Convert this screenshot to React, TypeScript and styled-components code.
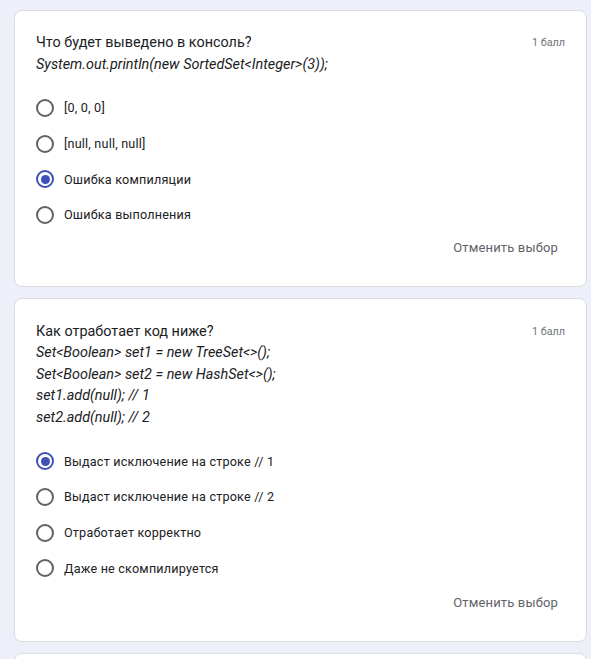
import React from "react";
import styled, { createGlobalStyle } from "styled-components";

const Global = createGlobalStyle`
  html, body { margin: 0; padding: 0; }
  body {
    background: #edf0f9;
    font-family: Roboto, "Liberation Sans", Arial, sans-serif;
    color: #202124;
  }
`;

const Page = styled.div`
  display: flex;
  flex-direction: column;
  gap: 11px;
  padding: 10px 4px 0 14px;
  height: 659px;
  box-sizing: border-box;
  overflow: hidden;
`;

const Card = styled.div<{ $top?: number; $bottom?: number; $height?: number }>`
  background: #fff;
  border: 1px solid #dadce0;
  border-radius: 8px;
  padding: ${(p) => p.$top ?? 20}px 21px ${(p) => p.$bottom ?? 23}px 21px;
  flex-shrink: 0;
  ${(p) => (p.$height ? `height: ${p.$height}px;` : "")}
`;

const Header = styled.div`
  display: flex;
  justify-content: space-between;
  align-items: flex-start;
`;

const TitleBlock = styled.div`
  font-size: 14.4px;
  line-height: 21.6px;
  color: #202124;
`;

const Code = styled.div`
  font-style: italic;
`;

const Points = styled.div`
  font-size: 10.8px;
  line-height: 21.6px;
  color: #70757a;
  flex-shrink: 0;
`;

const Options = styled.div`
  display: flex;
  flex-direction: column;
  margin-top: 15px;
`;

const Option = styled.label`
  display: flex;
  align-items: center;
  height: 35.6px;
  gap: 10px;
  font-size: 12.6px;
  color: #202124;
  letter-spacing: 0.2px;
`;

const Radio = styled.span<{ $checked?: boolean }>`
  width: 18px;
  height: 18px;
  box-sizing: border-box;
  border-radius: 50%;
  border: 2px solid ${(p) => (p.$checked ? "#3f51b5" : "#5f6368")};
  display: flex;
  align-items: center;
  justify-content: center;
  flex-shrink: 0;
  &::after {
    content: "";
    display: ${(p) => (p.$checked ? "block" : "none")};
    width: 9px;
    height: 9px;
    border-radius: 50%;
    background: #3f51b5;
  }
`;

const Footer = styled.div<{ $shift?: number }>`
  display: flex;
  justify-content: flex-end;
  align-items: center;
  height: 30px;
  margin-top: ${(p) => p.$shift ?? 0}px;
`;

const Clear = styled.button`
  background: none;
  border: none;
  padding: 0 7px 0 0;
  font-family: Roboto, "Liberation Sans", Arial, sans-serif;
  font-weight: 400;
  font-size: 13px;
  letter-spacing: 0.15px;
  color: #5f6368;
  cursor: pointer;
`;

type Q = {
  title: string;
  code: string[];
  options: string[];
  checked: number;
  top: number;
  shift: number;
};

const questions: Q[] = [
  {
    title: "Что будет выведено в консоль?",
    code: ["System.out.println(new SortedSet<Integer>(3));"],
    options: ["[0, 0, 0]", "[null, null, null]", "Ошибка компиляции", "Ошибка выполнения"],
    checked: 2,
    top: 21,
    shift: 0,
  },
  {
    title: "Как отработает код ниже?",
    code: [
      "Set<Boolean> set1 = new TreeSet<>();",
      "Set<Boolean> set2 = new HashSet<>();",
      "set1.add(null); // 1",
      "set2.add(null); // 2",
    ],
    options: [
      "Выдаст исключение на строке // 1",
      "Выдаст исключение на строке // 2",
      "Отработает корректно",
      "Даже не скомпилируется",
    ],
    checked: 0,
    top: 22,
    shift: 2,
  },
];

export default function App() {
  return (
    <>
      <Global />
      <Page>
        {questions.map((q, i) => (
          <Card key={i} $top={q.top}>
            <Header>
              <TitleBlock>
                <div>{q.title}</div>
                {q.code.map((c, j) => (
                  <Code key={j}>{c}</Code>
                ))}
              </TitleBlock>
              <Points>1 балл</Points>
            </Header>
            <Options>
              {q.options.map((o, j) => (
                <Option key={j}>
                  <Radio $checked={j === q.checked} />
                  <span>{o}</span>
                </Option>
              ))}
            </Options>
            <Footer $shift={q.shift}>
              <Clear>Отменить выбор</Clear>
            </Footer>
          </Card>
        ))}
        <Card $top={20} $height={100} />
      </Page>
    </>
  );
}
